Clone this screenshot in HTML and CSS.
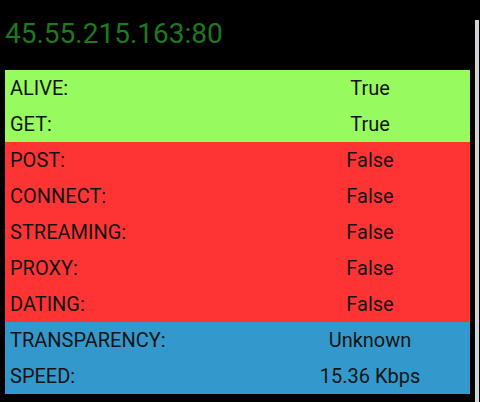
FILE: index.html
```html
<!DOCTYPE html>
<html lang="en">
<head>
  <meta charset="UTF-8">
  <meta name="viewport" content="width=device-width, initial-scale=1.0">
  <title>Proxy Check</title>
  <link rel="stylesheet" href="styles.css">
</head>
<body>
  <div class="screen">
    <div class="content">
      <h1 class="host">45.55.215.163:80</h1>
      <div class="results">
        <div class="row ok"><span class="label">ALIVE:</span><span class="value">True</span></div>
        <div class="row ok"><span class="label">GET:</span><span class="value">True</span></div>
        <div class="row fail"><span class="label">POST:</span><span class="value">False</span></div>
        <div class="row fail"><span class="label">CONNECT:</span><span class="value">False</span></div>
        <div class="row fail"><span class="label">STREAMING:</span><span class="value">False</span></div>
        <div class="row fail"><span class="label">PROXY:</span><span class="value">False</span></div>
        <div class="row fail"><span class="label">DATING:</span><span class="value">False</span></div>
        <div class="row info"><span class="label">TRANSPARENCY:</span><span class="value">Unknown</span></div>
        <div class="row info"><span class="label">SPEED:</span><span class="value">15.36 Kbps</span></div>
      </div>
    </div>
    <div class="scrollbar"></div>
  </div>
</body>
</html>
```

FILE: styles.css
```css
:root {
  --ok-green: #97fa5f;
  --fail-red: #fe3434;
  --info-blue: #3399cc;
  --host-green: #1d7a1d;
  --ink: #141414;
}

body {
  margin: 0;
  background-color: #000;
  font-family: Roboto, "Liberation Sans", sans-serif;
}

.screen {
  display: flex;
  width: 480px;
  height: 402px;
  overflow: hidden;
}

.content {
  flex: 1;
  padding: 0 5px;
}

.host {
  margin: 0;
  padding-top: 18px;
  height: 70px;
  box-sizing: border-box;
  font-size: 28px;
  font-weight: 400;
  line-height: 32px;
  color: var(--host-green);
}

.results {
  display: flex;
  flex-direction: column;
}

.row {
  display: flex;
  align-items: center;
  height: 36px;
  font-size: 20px;
  color: var(--ink);
}

.row.ok { background-color: var(--ok-green); }
.row.fail { background-color: var(--fail-red); }
.row.info { background-color: var(--info-blue); }

.label {
  width: 260px;
  padding-left: 5px;
}

.value {
  flex: 1;
  text-align: center;
}

.scrollbar {
  width: 4px;
  margin: 20px 1px 0 0;
  background-color: #d4d4d8;
}
```
